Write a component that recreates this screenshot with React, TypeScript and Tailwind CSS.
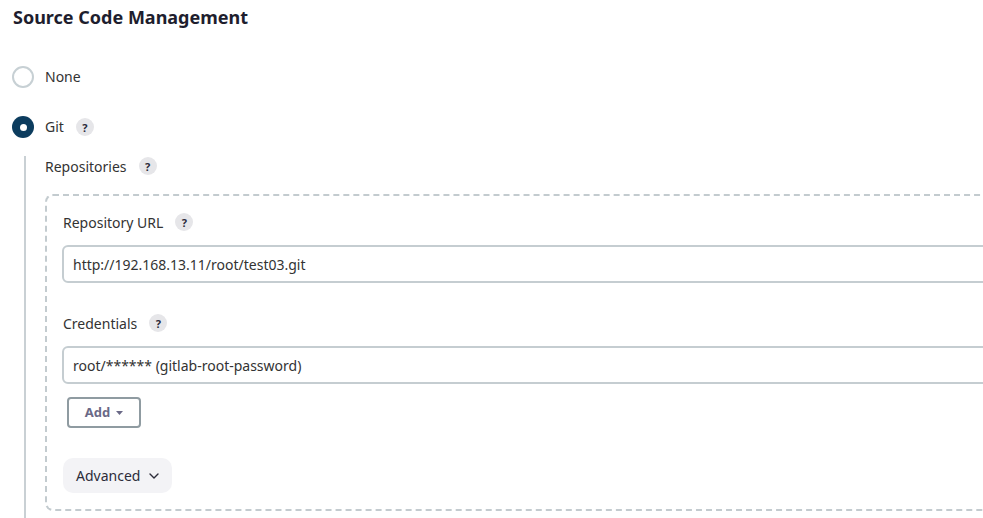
import React from "react";

function Help() {
  return (
    <span className="inline-flex items-center justify-center w-[18px] h-[18px] rounded-full bg-[#e6e6e9] text-[11px] font-bold text-[#2a2a3a] leading-none">
      ?
    </span>
  );
}

export default function App() {
  return (
    <div
      className="w-[983px] h-[518px] overflow-hidden bg-white text-[#333] text-[14px]"
      style={{ fontFamily: '"Noto Sans", "Open Sans", sans-serif' }}
    >
      <div className="pl-[13px] pt-[4px]">
        <h2 className="text-[18px] font-bold leading-[26px] text-[#1e1e2e]">Source Code Management</h2>

        <div className="mt-[36px] flex items-center h-[22px] -ml-[1px]">
          <span className="w-[22px] h-[22px] rounded-full border-2 border-[#c7d0d4] bg-white" />
          <span className="ml-[11px] leading-[20px]">None</span>
        </div>

        <div className="mt-[28px] flex items-center h-[22px] -ml-[1px]">
          <span className="w-[22px] h-[22px] rounded-full bg-[#0c3c5e] flex items-center justify-center">
            <span className="w-[7px] h-[7px] rounded-full bg-white" />
          </span>
          <span className="ml-[11px] mr-[12px] leading-[20px]">Git</span>
          <Help />
        </div>

        <div className="mt-[18px] ml-[11px] border-l-2 border-[#c9d0d4] pl-[19px] pb-[40px]">
          <div className="flex items-center h-[20px] gap-[12px]">
            <span>Repositories</span>
            <Help />
          </div>

          <div className="mt-[18px] w-[1000px] border-2 border-dashed border-[#c3cbcf] rounded-[8px] pl-[15px] pt-[16px] pb-[16px]">
            <div className="flex items-center h-[20px] gap-[12px] pl-[1px]">
              <span>Repository URL</span>
              <Help />
            </div>
            <div className="mt-[13px] h-[38px] border-2 border-[#c5cdd1] rounded-[6px] flex items-center pl-[9px]">
              http://192.168.13.11/root/test03.git
            </div>

            <div className="mt-[30px] flex items-center h-[20px] gap-[12px] pl-[1px]">
              <span>Credentials</span>
              <Help />
            </div>
            <div className="mt-[13px] h-[38px] border-2 border-[#c5cdd1] rounded-[6px] flex items-center pl-[9px]">
              root/****** (gitlab-root-password)
            </div>

            <div className="mt-[13px] ml-[5px] w-[74px] h-[31px] border-2 border-[#8f9ba1] rounded-[4px] flex items-center justify-center gap-[6px] text-[13px] font-bold text-[#6a6987]">
              <span>Add</span>
              <svg width="7" height="4" viewBox="0 0 7 4">
                <path d="M0 0 L7 0 L3.5 4 Z" fill="#6a6987" />
              </svg>
            </div>

            <div className="mt-[30px] ml-[1px] w-[109px] h-[35px] rounded-[10px] bg-[#f3f3f6] flex items-center pl-[13px] gap-[9px] text-[#2c2c3a]">
              <span>Advanced</span>
              <svg width="10" height="6" viewBox="0 0 10 6" fill="none">
                <path d="M1 1 L5 5 L9 1" stroke="#2c2c3a" strokeWidth="1.4" strokeLinecap="round" strokeLinejoin="round" />
              </svg>
            </div>
          </div>
        </div>
      </div>
    </div>
  );
}
